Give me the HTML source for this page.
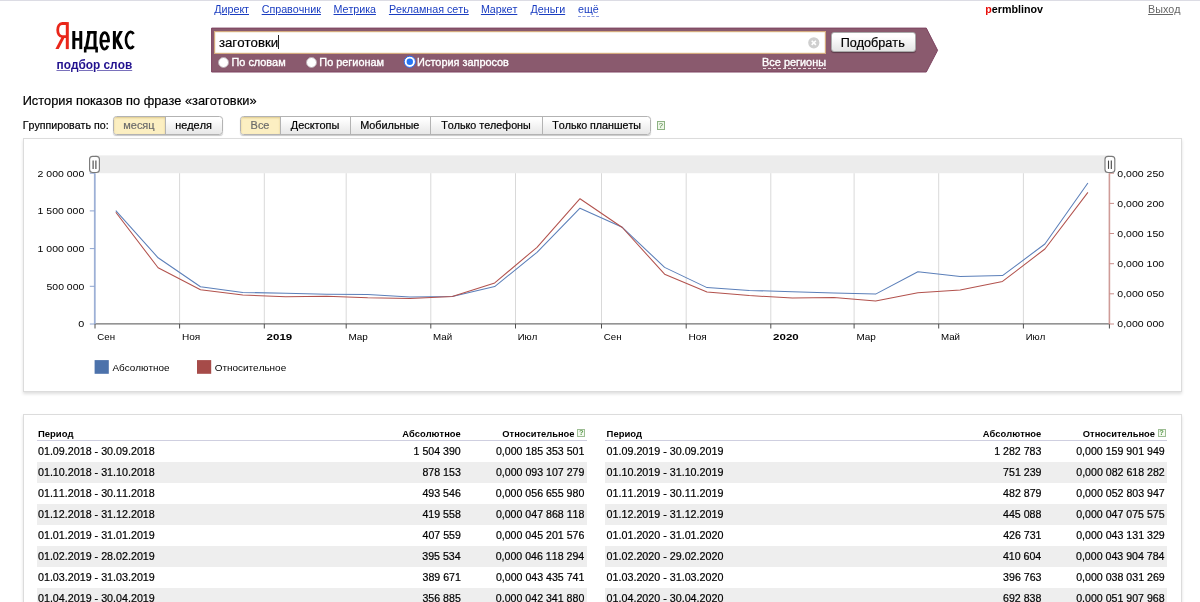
<!DOCTYPE html>
<html><head><meta charset="utf-8"><title>wordstat</title>
<style>
html,body{margin:0;padding:0;background:#fff;}
body{width:1200px;height:602px;overflow:hidden;position:relative;font-family:"Liberation Sans",sans-serif;color:#000;font-kerning:none;}
.t{position:absolute;white-space:nowrap;line-height:20px;height:20px;display:block;-webkit-text-stroke:0.2px currentColor;}
a.t{text-decoration-thickness:0.9px;-webkit-text-stroke:0;}
a.sub{text-decoration-color:rgba(34,18,143,.6);}
.topline{position:absolute;left:0;top:0;width:1200px;height:1px;background:#dcdce4;}
.logo{position:absolute;left:50px;top:18px;width:92px;height:40px;}
.bar{position:absolute;left:211px;top:27px;width:728px;height:46px;}
.inp{position:absolute;left:213.8px;top:31.3px;width:610.6px;height:20.5px;background:#fff;border:1px solid #d3aa7e;box-shadow:inset 0 0 0 0.5px #efe2c8;}
.cur{position:absolute;left:278.3px;top:35.4px;width:1px;height:13.2px;background:#222;}
.btn{position:absolute;left:831.2px;top:32.3px;width:82.6px;height:18px;border:1px solid #aaa;border-radius:3px;background:linear-gradient(#fff 20%,#e4e4e4);box-shadow:0 1px 1px rgba(0,0,0,.35);}
.rd{position:absolute;width:9.2px;height:9.2px;border-radius:50%;background:#fff;border:0.5px solid #b9a9b1;}
.dash{position:absolute;left:763px;top:67.9px;width:62.5px;height:0;border-top:1px dashed #e8dde2;}
.bg{position:absolute;top:116.3px;height:16.9px;border:1px solid #b3b3b3;border-radius:3.5px;box-shadow:0 1px 1px rgba(0,0,0,.22);background:linear-gradient(#fff 10%,#e7e7e7);overflow:hidden;}
.bg i{position:absolute;top:0;height:100%;}
.bg i.sel{background:#fcefc2;box-shadow:inset 0 1px 2px rgba(160,130,40,.35);}
.bg i.dv{width:1px;background:#b3b3b3;}
.help{position:absolute;left:656.7px;top:121.2px;width:6.4px;height:6.4px;border:1px solid #8db383;font-size:7.5px;line-height:7px;text-align:center;color:#3f7a34;background:#eef6e8;font-style:normal;}
.box{position:absolute;border:1px solid #dcdcdc;box-shadow:0 2px 3px rgba(0,0,0,.13);background:#fff;box-sizing:border-box;}
.chart{position:absolute;left:23px;top:138px;}
.ax{font-family:"Liberation Sans",sans-serif;font-size:9.6px;fill:#000;}
.hl{position:absolute;top:440.1px;height:1px;background:#cfcfe0;}
.rb{position:absolute;height:20.6px;background:#eeeeee;}
.q{position:absolute;width:6.2px;height:6.3px;border:1px solid #9dbd94;font-style:normal;font-size:7.5px;font-weight:bold;line-height:6.8px;text-align:center;color:#5a9a4c;background:#f4f9f0;}
#w{position:absolute;left:0;top:0;width:1200px;height:602px;overflow:hidden;will-change:transform;}
</style></head><body><div id="w">
<div class="topline"></div>
<a class="t" style="left:214.22px;top:-1px;font-size:10.73px;color:#1a3dc1;text-decoration:underline;">Директ</a>
<a class="t" style="left:261.66px;top:-1px;font-size:10.73px;color:#1a3dc1;text-decoration:underline;">Справочник</a>
<a class="t" style="left:333.52px;top:-1px;font-size:10.73px;color:#1a3dc1;text-decoration:underline;">Метрика</a>
<a class="t" style="left:388.92px;top:-1px;font-size:10.73px;color:#1a3dc1;text-decoration:underline;">Рекламная сеть</a>
<a class="t" style="left:480.92px;top:-1px;font-size:10.73px;color:#1a3dc1;text-decoration:underline;">Маркет</a>
<a class="t" style="left:530.52px;top:-1px;font-size:10.73px;color:#1a3dc1;text-decoration:underline;">Деньги</a>
<a class="t" style="left:578.04px;top:-1px;font-size:10.73px;color:#1a3dc1;border-bottom:1px dashed #8a9be0;height:16.5px;">ещё</a>
<span class="t" style="left:985.29px;top:-1px;font-size:10.72px;font-weight:bold;-webkit-text-stroke:0;"><b style="color:#e8100c">p</b>ermblinov</span>
<a class="t" style="left:1148.12px;top:-1px;font-size:10.73px;color:#666;text-decoration:underline;">Выход</a>
<a class="t" style="left:56.47px;top:55px;font-size:11.87px;font-weight:bold;-webkit-text-stroke:0;color:#22128f;text-decoration:underline;text-decoration-color:rgba(34,18,143,.6);">подбор слов</a>
<svg class="logo" viewBox="50 18 92 40">
<g fill="#e9261a" stroke="none">
<rect x="65.8" y="22.1" width="3.0" height="27"/>
<polygon points="61.6,37.0 64.9,37.0 58.7,49.1 55.4,49.1"/>
<path d="M66.5,23.5 H62.3 C56.2,23.5 56.2,36.6 62.3,36.6 H66.5" fill="none" stroke="#e9261a" stroke-width="2.8"/>
</g>
<g fill="#000">
<rect x="72.3" y="31" width="3.0" height="18.1"/><rect x="79.3" y="31" width="2.95" height="18.1"/><rect x="75" y="38.0" width="4.6" height="2.7"/>
<rect x="87" y="31" width="9.5" height="2.7"/><rect x="93.5" y="31" width="3.0" height="16.5"/>
<polygon points="87.6,33 90.6,33 88.1,47 85.1,47"/>
<rect x="83.9" y="46.7" width="14" height="2.6"/><rect x="83.9" y="49" width="2.6" height="3.5"/><rect x="95.3" y="49" width="2.6" height="3.5"/>
<rect x="112.9" y="31" width="3.0" height="18.1"/>
<polygon points="115.5,38.4 119.5,31 122.9,31 118,40.2 115.5,41"/>
<polygon points="115.5,38.9 118.1,38.6 123.3,49.1 119.8,49.1 115.5,41.3"/>
</g>
<g fill="none" stroke="#000" stroke-width="2.8">
<path d="M100.9,41.1 H108.5" stroke-width="2.4"/>
<path d="M108.5,42.2 V39.9 A3.85,8.25 0 1 0 107.8,45.6"/>
<path d="M133.6,33.9 A4.5,8.15 0 1 0 133.6,46.0"/>
</g>
</svg>
<svg class="bar" viewBox="0 0 728 46"><polygon points="0.6,1.1 715.3,1.1 726.6,23.3 715.3,45 0.6,45" fill="#8a5a6e" stroke="#7d4360" stroke-width="1"/></svg>
<div class="inp"></div>
<svg style="position:absolute;left:808.4px;top:37px" width="12" height="12" viewBox="0 0 12 12"><circle cx="5.8" cy="5.8" r="5.6" fill="#cfcfcf"/><path d="M3.7 3.7L7.9 7.9M7.9 3.7L3.7 7.9" stroke="#fff" stroke-width="1.6"/></svg>
<i class="cur"></i>
<div class="btn"></div>
<i class="rd" style="left:218.3px;top:57.2px"></i>
<i class="rd" style="left:306.2px;top:57.2px"></i>
<svg style="position:absolute;left:403px;top:55.4px" width="14" height="14" viewBox="0 0 14 14"><circle cx="6.8" cy="6.8" r="5.6" fill="#fff" stroke="#2a6cf0" stroke-width="1"/><circle cx="6.8" cy="6.8" r="3.2" fill="#2475f5"/></svg>
<div class="dash"></div>
<span class="t" style="left:218.88px;top:33px;font-size:13.25px;">заготовки</span>
<span class="t" style="left:840.68px;top:33px;font-size:12.61px;">Подобрать</span>
<span class="t" style="left:231.52px;top:52px;font-size:10.90px;color:#fff;-webkit-text-stroke:0.35px #fff;">По словам</span>
<span class="t" style="left:319.32px;top:52px;font-size:10.90px;color:#fff;-webkit-text-stroke:0.35px #fff;">По регионам</span>
<span class="t" style="left:417.11px;top:52px;font-size:10.90px;color:#fff;-webkit-text-stroke:0.35px #fff;">История запросов</span>
<span class="t" style="left:762.11px;top:52px;font-size:10.90px;color:#fff;-webkit-text-stroke:0.35px #fff;">Все регионы</span>
<div class="bg" style="left:113px;width:107.5px"><i class="sel" style="left:0;width:50.5px"></i><i class="dv" style="left:50.5px"></i></div>
<div class="bg" style="left:240.4px;width:408.6px"><i class="sel" style="left:0;width:38.6px"></i><i class="dv" style="left:38.6px"></i><i class="dv" style="left:109px"></i><i class="dv" style="left:189px"></i><i class="dv" style="left:300.2px"></i></div>
<i class="help">?</i>
<span class="t" style="left:22.65px;top:91px;font-size:12.81px;">История показов по фразе «заготовки»</span>
<span class="t" style="left:22.83px;top:115px;font-size:10.64px;">Группировать по:</span>
<span class="t" style="left:123.30px;top:115px;font-size:10.95px;color:#6b6b6b;">месяц</span>
<span class="t" style="left:175.25px;top:115px;font-size:10.85px;color:#000;">неделя</span>
<span class="t" style="left:250.61px;top:115px;font-size:10.95px;color:#6b6b6b;">Все</span>
<span class="t" style="left:290.75px;top:115px;font-size:10.95px;color:#000;">Десктопы</span>
<span class="t" style="left:360.22px;top:115px;font-size:10.85px;color:#000;">Мобильные</span>
<span class="t" style="left:441.26px;top:115px;font-size:10.72px;color:#000;">Только телефоны</span>
<span class="t" style="left:552.23px;top:115px;font-size:10.70px;color:#000;">Только планшеты</span>
<div class="box" style="left:23px;top:138px;width:1158.5px;height:254px;"></div>
<svg class="chart" width="1158" height="253" viewBox="23 138 1158 253">
<rect x="95" y="155.4" width="1014.4" height="17.8" fill="#ececec"/>
<line x1="179.6" y1="173.2" x2="179.6" y2="324" stroke="#d9d9d9" stroke-width="1"/>
<line x1="264.3" y1="173.2" x2="264.3" y2="324" stroke="#d9d9d9" stroke-width="1"/>
<line x1="346.2" y1="173.2" x2="346.2" y2="324" stroke="#d9d9d9" stroke-width="1"/>
<line x1="430.8" y1="173.2" x2="430.8" y2="324" stroke="#d9d9d9" stroke-width="1"/>
<line x1="515.5" y1="173.2" x2="515.5" y2="324" stroke="#d9d9d9" stroke-width="1"/>
<line x1="601.5" y1="173.2" x2="601.5" y2="324" stroke="#d9d9d9" stroke-width="1"/>
<line x1="686.2" y1="173.2" x2="686.2" y2="324" stroke="#d9d9d9" stroke-width="1"/>
<line x1="770.8" y1="173.2" x2="770.8" y2="324" stroke="#d9d9d9" stroke-width="1"/>
<line x1="854.1" y1="173.2" x2="854.1" y2="324" stroke="#d9d9d9" stroke-width="1"/>
<line x1="938.7" y1="173.2" x2="938.7" y2="324" stroke="#d9d9d9" stroke-width="1"/>
<line x1="1023.4" y1="173.2" x2="1023.4" y2="324" stroke="#d9d9d9" stroke-width="1"/>
<line x1="94" y1="323.9" x2="1109.9" y2="323.9" stroke="#505050" stroke-width="1"/>
<line x1="95.0" y1="324" x2="95.0" y2="328.5" stroke="#505050" stroke-width="1"/>
<line x1="179.6" y1="324" x2="179.6" y2="328.5" stroke="#505050" stroke-width="1"/>
<line x1="264.3" y1="324" x2="264.3" y2="328.5" stroke="#505050" stroke-width="1"/>
<line x1="346.2" y1="324" x2="346.2" y2="328.5" stroke="#505050" stroke-width="1"/>
<line x1="430.8" y1="324" x2="430.8" y2="328.5" stroke="#505050" stroke-width="1"/>
<line x1="515.5" y1="324" x2="515.5" y2="328.5" stroke="#505050" stroke-width="1"/>
<line x1="601.5" y1="324" x2="601.5" y2="328.5" stroke="#505050" stroke-width="1"/>
<line x1="686.2" y1="324" x2="686.2" y2="328.5" stroke="#505050" stroke-width="1"/>
<line x1="770.8" y1="324" x2="770.8" y2="328.5" stroke="#505050" stroke-width="1"/>
<line x1="854.1" y1="324" x2="854.1" y2="328.5" stroke="#505050" stroke-width="1"/>
<line x1="938.7" y1="324" x2="938.7" y2="328.5" stroke="#505050" stroke-width="1"/>
<line x1="1023.4" y1="324" x2="1023.4" y2="328.5" stroke="#505050" stroke-width="1"/>
<line x1="1109.4" y1="324" x2="1109.4" y2="328.5" stroke="#505050" stroke-width="1"/>
<line x1="94.8" y1="173.2" x2="94.8" y2="324" stroke="#9db0d6" stroke-width="1.8"/>
<line x1="89.8" y1="324.0" x2="94.8" y2="324.0" stroke="#8ea4cf" stroke-width="1"/>
<text x="78.3" y="327.3" textLength="6.0" lengthAdjust="spacingAndGlyphs" class="ax">0</text>
<line x1="89.8" y1="286.3" x2="94.8" y2="286.3" stroke="#8ea4cf" stroke-width="1"/>
<text x="46.5" y="289.6" textLength="37.8" lengthAdjust="spacingAndGlyphs" class="ax">500 000</text>
<line x1="89.8" y1="248.6" x2="94.8" y2="248.6" stroke="#8ea4cf" stroke-width="1"/>
<text x="37.6" y="251.9" textLength="46.7" lengthAdjust="spacingAndGlyphs" class="ax">1 000 000</text>
<line x1="89.8" y1="210.9" x2="94.8" y2="210.9" stroke="#8ea4cf" stroke-width="1"/>
<text x="37.6" y="214.2" textLength="46.7" lengthAdjust="spacingAndGlyphs" class="ax">1 500 000</text>
<line x1="89.8" y1="173.2" x2="94.8" y2="173.2" stroke="#8ea4cf" stroke-width="1"/>
<text x="37.6" y="176.5" textLength="46.7" lengthAdjust="spacingAndGlyphs" class="ax">2 000 000</text>
<line x1="1109.4" y1="173.2" x2="1109.4" y2="324" stroke="#cf9c98" stroke-width="1.6"/>
<line x1="1109.4" y1="324.0" x2="1114" y2="324.0" stroke="#c98d89" stroke-width="1"/>
<text x="1117.3" y="327.3" textLength="46.8" lengthAdjust="spacingAndGlyphs" class="ax">0,000 000</text>
<line x1="1109.4" y1="293.8" x2="1114" y2="293.8" stroke="#c98d89" stroke-width="1"/>
<text x="1117.3" y="297.1" textLength="46.8" lengthAdjust="spacingAndGlyphs" class="ax">0,000 050</text>
<line x1="1109.4" y1="263.7" x2="1114" y2="263.7" stroke="#c98d89" stroke-width="1"/>
<text x="1117.3" y="267.0" textLength="46.8" lengthAdjust="spacingAndGlyphs" class="ax">0,000 100</text>
<line x1="1109.4" y1="233.5" x2="1114" y2="233.5" stroke="#c98d89" stroke-width="1"/>
<text x="1117.3" y="236.8" textLength="46.8" lengthAdjust="spacingAndGlyphs" class="ax">0,000 150</text>
<line x1="1109.4" y1="203.4" x2="1114" y2="203.4" stroke="#c98d89" stroke-width="1"/>
<text x="1117.3" y="206.7" textLength="46.8" lengthAdjust="spacingAndGlyphs" class="ax">0,000 200</text>
<line x1="1109.4" y1="173.2" x2="1114" y2="173.2" stroke="#c98d89" stroke-width="1"/>
<text x="1117.3" y="176.5" textLength="46.8" lengthAdjust="spacingAndGlyphs" class="ax">0,000 250</text>
<text x="97.3" y="339.7" textLength="17.7" lengthAdjust="spacingAndGlyphs" class="ax">Сен</text>
<text x="181.9" y="339.7" textLength="18.3" lengthAdjust="spacingAndGlyphs" class="ax">Ноя</text>
<text x="266.6" y="339.7" textLength="25.6" lengthAdjust="spacingAndGlyphs" class="ax" font-weight="bold">2019</text>
<text x="348.5" y="339.7" textLength="19.4" lengthAdjust="spacingAndGlyphs" class="ax">Мар</text>
<text x="433.1" y="339.7" textLength="19.0" lengthAdjust="spacingAndGlyphs" class="ax">Май</text>
<text x="517.8" y="339.7" textLength="19.5" lengthAdjust="spacingAndGlyphs" class="ax">Июл</text>
<text x="603.8" y="339.7" textLength="17.7" lengthAdjust="spacingAndGlyphs" class="ax">Сен</text>
<text x="688.5" y="339.7" textLength="18.3" lengthAdjust="spacingAndGlyphs" class="ax">Ноя</text>
<text x="773.1" y="339.7" textLength="25.6" lengthAdjust="spacingAndGlyphs" class="ax" font-weight="bold">2020</text>
<text x="856.4" y="339.7" textLength="19.4" lengthAdjust="spacingAndGlyphs" class="ax">Мар</text>
<text x="941.0" y="339.7" textLength="19.0" lengthAdjust="spacingAndGlyphs" class="ax">Май</text>
<text x="1025.7" y="339.7" textLength="19.5" lengthAdjust="spacingAndGlyphs" class="ax">Июл</text>
<polyline points="115.8,210.6 158.1,257.8 200.5,286.8 242.8,292.4 285.8,293.3 326.7,294.2 367.7,294.6 410.0,297.1 452.3,296.4 494.7,286.6 537.0,252.3 580.0,208.2 622.3,227.3 664.6,267.4 707.0,287.6 749.3,290.4 792.3,291.8 833.9,293.0 875.6,294.1 917.9,271.8 960.2,276.4 1002.5,275.6 1044.9,244.0 1087.9,183.0" fill="none" stroke="#5b7fb9" stroke-width="1.05" stroke-linejoin="round"/>
<polyline points="115.8,212.2 158.1,267.8 200.5,289.8 242.8,295.1 285.8,296.7 326.7,296.2 367.7,297.8 410.0,298.5 452.3,296.4 494.7,282.9 537.0,247.3 580.0,198.7 622.3,227.5 664.6,274.2 707.0,292.1 749.3,295.6 792.3,298.0 833.9,297.5 875.6,301.1 917.9,292.7 960.2,289.9 1002.5,281.4 1044.9,249.0 1087.9,192.4" fill="none" stroke="#b2524d" stroke-width="1.05" stroke-linejoin="round"/>
<rect x="89.6" y="156.3" width="9.8" height="16.2" rx="3" ry="3" fill="#fff" stroke="#7a7a7a" stroke-width="1.15"/>
<line x1="93.1" y1="160.6" x2="93.1" y2="168.9" stroke="#444" stroke-width="1.1"/>
<line x1="95.9" y1="160.6" x2="95.9" y2="168.9" stroke="#444" stroke-width="1.1"/>
<rect x="1105.0" y="156.3" width="9.8" height="16.2" rx="3" ry="3" fill="#fff" stroke="#7a7a7a" stroke-width="1.15"/>
<line x1="1108.5" y1="160.6" x2="1108.5" y2="168.9" stroke="#444" stroke-width="1.1"/>
<line x1="1111.3" y1="160.6" x2="1111.3" y2="168.9" stroke="#444" stroke-width="1.1"/>
<rect x="94.6" y="360.1" width="14.2" height="13.7" fill="#4c72ab"/>
<text x="112.5" y="370.5" textLength="56.9" lengthAdjust="spacingAndGlyphs" class="ax">Абсолютное</text>
<rect x="197" y="360.1" width="14.2" height="13.7" fill="#a64b49"/>
<text x="214.7" y="370.5" textLength="71.5" lengthAdjust="spacingAndGlyphs" class="ax">Относительное</text>
</svg>
<div class="box" style="left:23px;top:414px;width:1158.5px;height:230px;"></div>
<div class="hl" style="left:37.3px;width:549.8px"></div>
<span class="t" style="left:37.96px;top:424px;font-size:9.50px;font-weight:bold;-webkit-text-stroke:0;">Период</span>
<span class="t" style="left:402.22px;top:424px;font-size:9.35px;font-weight:bold;-webkit-text-stroke:0;">Абсолютное</span>
<span class="t" style="left:502.34px;top:424px;font-size:9.35px;font-weight:bold;-webkit-text-stroke:0;">Относительное</span>
<i class="q" style="left:577.1px;top:428.8px">?</i>
<span class="t" style="left:37.98px;top:441px;font-size:10.72px;">01.09.2018 - 30.09.2018</span>
<span class="t" style="left:413.57px;top:441px;font-size:10.62px;">1 504 390</span>
<span class="t" style="left:495.93px;top:441px;font-size:10.62px;">0,000 185 353 501</span>
<div class="rb" style="left:37.3px;width:549.8px;top:462.2px"></div>
<span class="t" style="left:37.98px;top:462px;font-size:10.72px;">01.10.2018 - 31.10.2018</span>
<span class="t" style="left:422.48px;top:462px;font-size:10.62px;">878 153</span>
<span class="t" style="left:495.92px;top:462px;font-size:10.62px;">0,000 093 107 279</span>
<span class="t" style="left:37.98px;top:483px;font-size:10.72px;">01.11.2018 - 30.11.2018</span>
<span class="t" style="left:422.48px;top:483px;font-size:10.62px;">493 546</span>
<span class="t" style="left:495.83px;top:483px;font-size:10.62px;">0,000 056 655 980</span>
<div class="rb" style="left:37.3px;width:549.8px;top:504.2px"></div>
<span class="t" style="left:37.98px;top:504px;font-size:10.72px;">01.12.2018 - 31.12.2018</span>
<span class="t" style="left:422.47px;top:504px;font-size:10.62px;">419 558</span>
<span class="t" style="left:495.88px;top:504px;font-size:10.62px;">0,000 047 868 118</span>
<span class="t" style="left:37.98px;top:525px;font-size:10.72px;">01.01.2019 - 31.01.2019</span>
<span class="t" style="left:422.51px;top:525px;font-size:10.62px;">407 559</span>
<span class="t" style="left:495.88px;top:525px;font-size:10.62px;">0,000 045 201 576</span>
<div class="rb" style="left:37.3px;width:549.8px;top:546.2px"></div>
<span class="t" style="left:37.98px;top:546px;font-size:10.72px;">01.02.2019 - 28.02.2019</span>
<span class="t" style="left:422.32px;top:546px;font-size:10.62px;">395 534</span>
<span class="t" style="left:495.73px;top:546px;font-size:10.62px;">0,000 046 118 294</span>
<span class="t" style="left:37.98px;top:567px;font-size:10.72px;">01.03.2019 - 31.03.2019</span>
<span class="t" style="left:422.53px;top:567px;font-size:10.62px;">389 671</span>
<span class="t" style="left:495.93px;top:567px;font-size:10.62px;">0,000 043 435 741</span>
<div class="rb" style="left:37.3px;width:549.8px;top:588.2px"></div>
<span class="t" style="left:37.98px;top:588px;font-size:10.72px;">01.04.2019 - 30.04.2019</span>
<span class="t" style="left:422.46px;top:588px;font-size:10.62px;">356 885</span>
<span class="t" style="left:495.83px;top:588px;font-size:10.62px;">0,000 042 341 880</span>
<div class="hl" style="left:605.4px;width:562.0px"></div>
<span class="t" style="left:606.56px;top:424px;font-size:9.50px;font-weight:bold;-webkit-text-stroke:0;">Период</span>
<span class="t" style="left:982.82px;top:424px;font-size:9.35px;font-weight:bold;-webkit-text-stroke:0;">Абсолютное</span>
<span class="t" style="left:1082.84px;top:424px;font-size:9.35px;font-weight:bold;-webkit-text-stroke:0;">Относительное</span>
<i class="q" style="left:1157.5px;top:428.8px">?</i>
<span class="t" style="left:606.58px;top:441px;font-size:10.72px;">01.09.2019 - 30.09.2019</span>
<span class="t" style="left:994.22px;top:441px;font-size:10.62px;">1 282 783</span>
<span class="t" style="left:1076.22px;top:441px;font-size:10.62px;">0,000 159 901 949</span>
<div class="rb" style="left:605.4px;width:562.0px;top:462.2px"></div>
<span class="t" style="left:606.58px;top:462px;font-size:10.72px;">01.10.2019 - 31.10.2019</span>
<span class="t" style="left:1003.11px;top:462px;font-size:10.62px;">751 239</span>
<span class="t" style="left:1076.25px;top:462px;font-size:10.62px;">0,000 082 618 282</span>
<span class="t" style="left:606.58px;top:483px;font-size:10.72px;">01.11.2019 - 30.11.2019</span>
<span class="t" style="left:1003.11px;top:483px;font-size:10.62px;">482 879</span>
<span class="t" style="left:1076.25px;top:483px;font-size:10.62px;">0,000 052 803 947</span>
<div class="rb" style="left:605.4px;width:562.0px;top:504.2px"></div>
<span class="t" style="left:606.58px;top:504px;font-size:10.72px;">01.12.2019 - 31.12.2019</span>
<span class="t" style="left:1003.07px;top:504px;font-size:10.62px;">445 088</span>
<span class="t" style="left:1076.16px;top:504px;font-size:10.62px;">0,000 047 075 575</span>
<span class="t" style="left:606.58px;top:525px;font-size:10.72px;">01.01.2020 - 31.01.2020</span>
<span class="t" style="left:1003.13px;top:525px;font-size:10.62px;">426 731</span>
<span class="t" style="left:1076.22px;top:525px;font-size:10.62px;">0,000 043 131 329</span>
<div class="rb" style="left:605.4px;width:562.0px;top:546.2px"></div>
<span class="t" style="left:606.58px;top:546px;font-size:10.72px;">01.02.2020 - 29.02.2020</span>
<span class="t" style="left:1002.92px;top:546px;font-size:10.62px;">410 604</span>
<span class="t" style="left:1076.03px;top:546px;font-size:10.62px;">0,000 043 904 784</span>
<span class="t" style="left:606.58px;top:567px;font-size:10.72px;">01.03.2020 - 31.03.2020</span>
<span class="t" style="left:1003.08px;top:567px;font-size:10.62px;">396 763</span>
<span class="t" style="left:1076.22px;top:567px;font-size:10.62px;">0,000 038 031 269</span>
<div class="rb" style="left:605.4px;width:562.0px;top:588.2px"></div>
<span class="t" style="left:606.58px;top:588px;font-size:10.72px;">01.04.2020 - 30.04.2020</span>
<span class="t" style="left:1003.07px;top:588px;font-size:10.62px;">692 838</span>
<span class="t" style="left:1076.18px;top:588px;font-size:10.62px;">0,000 051 907 968</span>
</div></body></html>
